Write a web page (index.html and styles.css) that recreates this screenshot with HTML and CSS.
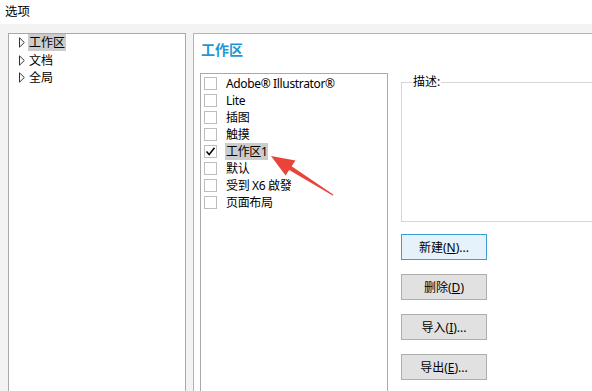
FILE: index.html
```html
<!DOCTYPE html>
<html lang="zh">
<head>
  <meta charset="UTF-8" />
  <title>选项</title>
  <link rel="stylesheet" href="styles.css">
</head>
<body>
  <div class="titlebar">选项</div>

  <div class="main">
    <div class="tree">
      <div class="tree-item">
        <svg class="twisty" width="6" height="11" viewBox="0 0 6 11"><path d="M0.5 0.8 L5.3 5.5 L0.5 10.2 Z" fill="#fff" stroke="#333" stroke-width="1"/></svg>
        <span class="tree-label selected">工作区</span>
      </div>
      <div class="tree-item">
        <svg class="twisty" width="6" height="11" viewBox="0 0 6 11"><path d="M0.5 0.8 L5.3 5.5 L0.5 10.2 Z" fill="#fff" stroke="#333" stroke-width="1"/></svg>
        <span class="tree-label">文档</span>
      </div>
      <div class="tree-item">
        <svg class="twisty" width="6" height="11" viewBox="0 0 6 11"><path d="M0.5 0.8 L5.3 5.5 L0.5 10.2 Z" fill="#fff" stroke="#333" stroke-width="1"/></svg>
        <span class="tree-label">全局</span>
      </div>
    </div>

    <div class="page">
      <h2 class="page-title">工作区</h2>
      <div class="page-body">
        <div class="checklist">
          <div class="check-row"><span class="box"></span><span class="check-label">Adobe® Illustrator®</span></div>
          <div class="check-row"><span class="box"></span><span class="check-label">Lite</span></div>
          <div class="check-row"><span class="box"></span><span class="check-label">插图</span></div>
          <div class="check-row"><span class="box"></span><span class="check-label">触摸</span></div>
          <div class="check-row">
            <span class="box checked"><svg width="11" height="11" viewBox="0 0 11 11"><path d="M1.5 5.5 L4.2 8.5 L9.5 1.8" fill="none" stroke="#000" stroke-width="1.5"/></svg></span>
            <span class="check-label selected">工作区1</span>
          </div>
          <div class="check-row"><span class="box"></span><span class="check-label">默认</span></div>
          <div class="check-row"><span class="box"></span><span class="check-label">受到 X6 啟發</span></div>
          <div class="check-row"><span class="box"></span><span class="check-label">页面布局</span></div>
        </div>

        <div class="side">
          <fieldset class="desc">
            <legend>描述:</legend>
          </fieldset>
          <div class="buttons">
            <button class="btn focused">新建(<u>N</u>)...</button>
            <button class="btn">删除(<u>D</u>)</button>
            <button class="btn">导入(<u>I</u>)...</button>
            <button class="btn">导出(<u>E</u>)...</button>
          </div>
        </div>
      </div>
    </div>
  </div>

  <svg class="arrow" width="592" height="391" viewBox="0 0 592 391">
    <polygon points="271,156 295.5,160.5 291.6,166.3 333.6,194.8 332.6,195.6 289.2,169.9 285.6,175.6" fill="#e8443a"/>
  </svg>
</body>
</html>
```

FILE: styles.css
```css
html, body {
  margin: 0;
  height: 100%;
  overflow: hidden;
}

body {
  font-family: "Noto Sans", "Noto Sans CJK SC", sans-serif;
  font-size: 12px;
  color: #000;
  background: #f3f3f3;
  position: relative;
}

.titlebar {
  height: 24px;
  line-height: 24px;
  padding-left: 5px;
  font-size: 12.5px;
  background: #fff;
}

.main {
  display: flex;
  gap: 7px;
  padding: 9px 0 0 8px;
  height: 400px;
}

.tree {
  flex: 0 0 178px;
  box-sizing: border-box;
  background: #fff;
  border: 1px solid #a9a9a9;
  border-bottom: none;
}

.tree-item {
  display: flex;
  align-items: center;
  height: 17.5px;
  padding-left: 10px;
}

.twisty {
  margin-right: 3px;
}

.tree-label {
  line-height: 17px;
  padding: 0 1px;
}

.selected {
  background: #cccccc;
}

.page {
  flex: 0 0 auto;
  width: 500px;
  box-sizing: border-box;
  background: #fff;
  border: 1px solid #b4b4b4;
  border-bottom: none;
  padding: 6px 0 0 6px;
}

.page-title {
  margin: 0 0 13px 1px;
  font-size: 14px;
  font-weight: bold;
  line-height: 20px;
  color: #1e98d4;
}

.page-body {
  display: flex;
  gap: 13px;
}

.checklist {
  flex: 0 0 188px;
  box-sizing: border-box;
  height: 330px;
  border: 1px solid #a9a9a9;
  border-bottom: none;
  padding: 1px 0 0 3px;
}

.check-row {
  display: flex;
  align-items: center;
  height: 17px;
}

.box {
  box-sizing: border-box;
  width: 13px;
  height: 13px;
  border: 1px solid #bdbdbd;
  background: #fff;
  display: flex;
  align-items: center;
  justify-content: center;
}

.check-label {
  margin-left: 8px;
  padding: 0 1px;
  line-height: 17px;
  letter-spacing: -0.35px;
}

.side {
  width: 200px;
}

.desc {
  box-sizing: border-box;
  margin: 2px 0 0 0;
  padding: 0 10px;
  height: 147px;
  border: 1px solid #d6d6d6;
  border-right: none;
}

.desc legend {
  padding: 0 1px;
  line-height: 14px;
  font-size: 12px;
}

.buttons {
  display: flex;
  flex-direction: column;
  gap: 14px;
  margin-top: 12px;
}

.btn {
  width: 86px;
  height: 26px;
  box-sizing: border-box;
  border: 1px solid #adadad;
  background: #e1e1e1;
  font-family: "Noto Sans", "Noto Sans CJK SC", sans-serif;
  font-size: 12px;
  color: #000;
  padding: 0;
}

.btn.focused {
  border-color: #3a9fd2;
  background: #e5f1fb;
}

.arrow {
  position: absolute;
  left: 0;
  top: 0;
  pointer-events: none;
}
```
